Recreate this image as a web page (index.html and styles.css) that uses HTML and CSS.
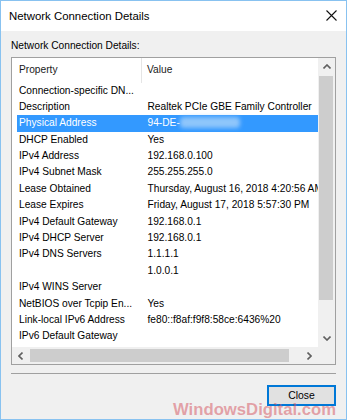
FILE: index.html
```html
<!DOCTYPE html>
<html lang="en">
<head>
  <meta charset="UTF-8">
  <meta name="viewport" content="width=device-width, initial-scale=1.0">
  <title>Network Connection Details</title>
  <link rel="stylesheet" href="styles.css">
</head>
<body>
  <div class="window">
    <div class="titlebar">
      <span class="title">Network Connection Details</span>
      <svg class="close-x" width="11" height="11" viewBox="0 0 11 11">
        <path d="M0.5 0.5 L10.5 10.5 M10.5 0.5 L0.5 10.5" stroke="#111" stroke-width="1.1" fill="none"/>
      </svg>
    </div>

    <div class="content">
      <div class="label">Network Connection Details:</div>

      <div class="listview">
        <div class="list">
          <div class="header">
            <div class="hcell first">Property</div>
            <div class="hcell">Value</div>
          </div>
          <div class="row"><span>Connection-specific DN...</span><span></span></div>
          <div class="row"><span>Description</span><span>Realtek PCIe GBE Family Controller</span></div>
          <div class="row selected"><span>Physical Address</span><span>94-DE-<i class="blur"></i></span></div>
          <div class="row"><span>DHCP Enabled</span><span>Yes</span></div>
          <div class="row"><span>IPv4 Address</span><span>192.168.0.100</span></div>
          <div class="row"><span>IPv4 Subnet Mask</span><span>255.255.255.0</span></div>
          <div class="row"><span>Lease Obtained</span><span>Thursday, August 16, 2018 4:20:56 AM</span></div>
          <div class="row"><span>Lease Expires</span><span>Friday, August 17, 2018 5:57:30 PM</span></div>
          <div class="row"><span>IPv4 Default Gateway</span><span>192.168.0.1</span></div>
          <div class="row"><span>IPv4 DHCP Server</span><span>192.168.0.1</span></div>
          <div class="row"><span>IPv4 DNS Servers</span><span>1.1.1.1</span></div>
          <div class="row"><span></span><span>1.0.0.1</span></div>
          <div class="row"><span>IPv4 WINS Server</span><span></span></div>
          <div class="row"><span>NetBIOS over Tcpip En...</span><span>Yes</span></div>
          <div class="row"><span>Link-local IPv6 Address</span><span>fe80::f8af:f9f8:58ce:6436%20</span></div>
          <div class="row"><span>IPv6 Default Gateway</span><span></span></div>
          <div class="row"><span>IPv6 DNS Server</span><span>2606:4700:4700::1111</span></div>
        </div>

        <div class="vscroll">
          <div class="sbtn">
            <svg width="8" height="5" viewBox="0 0 8 5"><path d="M0.5 4.5 L4 1 L7.5 4.5" stroke="#606060" stroke-width="1.6" fill="none"/></svg>
          </div>
          <div class="vthumb"></div>
          <div class="track"></div>
          <div class="sbtn">
            <svg width="8" height="5" viewBox="0 0 8 5"><path d="M0.5 0.5 L4 4 L7.5 0.5" stroke="#606060" stroke-width="1.6" fill="none"/></svg>
          </div>
        </div>

        <div class="hscroll">
          <div class="sbtn">
            <svg width="5" height="8" viewBox="0 0 5 8"><path d="M4.5 0.5 L1 4 L4.5 7.5" stroke="#606060" stroke-width="1.6" fill="none"/></svg>
          </div>
          <div class="hthumb"></div>
          <div class="track"></div>
          <div class="sbtn">
            <svg width="5" height="8" viewBox="0 0 5 8"><path d="M0.5 0.5 L4 4 L0.5 7.5" stroke="#606060" stroke-width="1.6" fill="none"/></svg>
          </div>
        </div>

        <div class="corner"></div>
      </div>

      <div class="separator"></div>

      <div class="actions">
        <button class="btn">Close</button>
      </div>
    </div>

    <div class="watermark">WindowsDigital.com</div>
  </div>
</body>
</html>
```

FILE: styles.css
```css
* {
  margin: 0;
  padding: 0;
  box-sizing: border-box;
}

body {
  font-family: 'Liberation Sans', Arial, sans-serif;
  font-size: 10.2px;
  color: #000;
  background: #f0f0f0;
}

.window {
  position: relative;
  width: 347px;
  height: 420px;
  border: 1px solid #88c2f0;
  background: #f0f0f0;
  overflow: hidden;
}

/* title bar */
.titlebar {
  height: 30px;
  background: #fff;
  display: flex;
  align-items: center;
  justify-content: space-between;
  padding: 0 9px 1px 8px;
}

.title {
  font-size: 11.4px;
  color: #000;
}

.close-x {
  display: block;
}

/* dialog body */
.content {
  padding: 8px 10px 0 10px;
}

.label {
  line-height: 14px;
  margin-bottom: 4px;
}

.listview {
  display: grid;
  grid-template-columns: 306px 17px;
  grid-template-rows: 289px 17px;
  width: 325px;
  border: 1px solid #a0a0a0;
  background: #fff;
}

.list {
  overflow: hidden;
  white-space: nowrap;
}

.header {
  display: grid;
  grid-template-columns: 130px 1fr;
  height: 24.5px;
  line-height: 24.5px;
}

.hcell {
  padding-left: 5px;
  color: #1a1a1a;
}

.hcell.first {
  padding-left: 7px;
  border-right: 1px solid #e5e5e5;
}

.row {
  display: grid;
  grid-template-columns: 125px 1fr;
  height: 16.4px;
  line-height: 16.4px;
  margin-left: 5px;
}

.row span:first-child {
  padding-left: 2px;
  overflow: hidden;
}

.row span:last-child {
  padding-left: 5.5px;
}

.row.selected {
  background: #3399ff;
  color: #fff;
}

.blur {
  display: inline-block;
  width: 60px;
  height: 11px;
  vertical-align: -2px;
  background: #8fc6fb;
  border-radius: 4px;
  filter: blur(2px);
}

/* scrollbars */
.vscroll {
  display: flex;
  flex-direction: column;
  background: #f0f0f0;
}

.hscroll {
  display: flex;
  background: #f0f0f0;
}

.sbtn {
  flex: 0 0 17px;
  display: flex;
  align-items: center;
  justify-content: center;
}

.vthumb {
  height: 224px;
  margin: 1px 2px 0 1px;
  background: #cdcdcd;
}

.hthumb {
  width: 259px;
  margin: 2px 0 2px 1px;
  background: #cdcdcd;
}

.track {
  flex: 1;
}

.corner {
  background: #f0f0f0;
}

.separator {
  width: 325px;
  height: 1px;
  margin-top: 8px;
  background: #a0a0a0;
}

.actions {
  display: flex;
  justify-content: flex-end;
  width: 325px;
  margin-top: 11px;
}

.btn {
  width: 69px;
  height: 21px;
  border: 2px solid #0078d7;
  background: #e1e1e1;
  font-family: 'Liberation Sans', Arial, sans-serif;
  font-size: 10.4px;
  color: #000;
}

.watermark {
  position: absolute;
  left: 172px;
  top: 399px;
  font-size: 16.7px;
  font-weight: bold;
  line-height: 20px;
  color: rgba(212, 80, 92, 0.5);
  white-space: nowrap;
}
```
